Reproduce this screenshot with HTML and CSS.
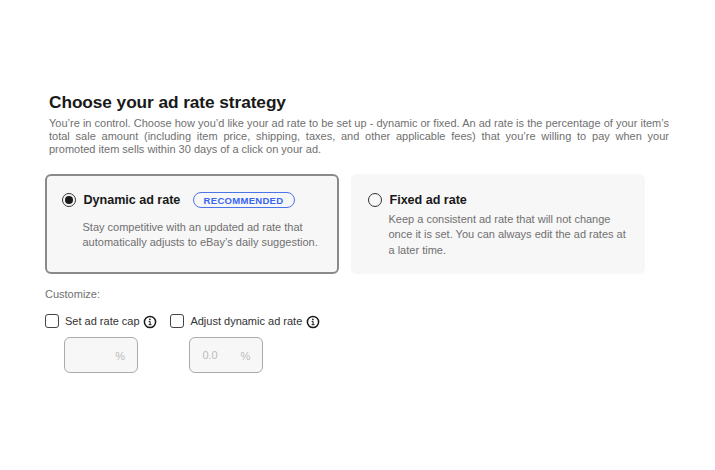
FILE: index.html
```html
<!DOCTYPE html>
<html lang="en">
<head>
    <meta charset="UTF-8">
    <meta name="viewport" content="width=device-width, initial-scale=1.0">
    <title>Choose your ad rate strategy</title>
    <link rel="stylesheet" href="styles.css">
</head>
<body>
    <div class="intro">
        <h1>Choose your ad rate strategy</h1>
        <p>You’re in control. Choose how you’d like your ad rate to be set up - dynamic or fixed. An ad rate is the percentage of your item’s total sale amount (including item price, shipping, taxes, and other applicable fees) that you’re willing to pay when your promoted item sells within 30 days of a click on your ad.</p>
    </div>

    <div class="cards">
        <div class="card selected">
            <div class="card-head">
                <span class="radio checked"></span>
                <h2 class="dynamic-title">Dynamic ad rate</h2>
                <span class="badge">RECOMMENDED</span>
            </div>
            <p class="dynamic-text">Stay competitive with an updated ad rate that<br>automatically adjusts to eBay’s daily suggestion.</p>
        </div>
        <div class="card">
            <div class="card-head">
                <span class="radio"></span>
                <h2>Fixed ad rate</h2>
            </div>
            <p class="fixed-text">Keep a consistent ad rate that will not change<br>once it is set. You can always edit the ad rates at<br>a later time.</p>
        </div>
    </div>

    <div class="customize">
        <p class="customize-label">Customize:</p>
        <div class="options">
            <div class="option cap">
                <div class="option-head">
                    <span class="checkbox"></span>
                    <span class="option-label">Set ad rate cap</span>
                    <svg class="info" viewBox="0 0 14 14">
                        <circle cx="7" cy="7" r="5.6" fill="none" stroke="#191919" stroke-width="1.5"/>
                        <circle cx="6.9" cy="4.4" r="0.85" fill="#191919"/>
                        <path d="M5.7 6.5h1.4v3.2M5.6 9.7h2.9" fill="none" stroke="#191919" stroke-width="1"/>
                    </svg>
                </div>
                <div class="field"><span class="value"></span><span class="unit">%</span></div>
            </div>
            <div class="option adjust">
                <div class="option-head">
                    <span class="checkbox"></span>
                    <span class="option-label">Adjust dynamic ad rate</span>
                    <svg class="info" viewBox="0 0 14 14">
                        <circle cx="7" cy="7" r="5.6" fill="none" stroke="#191919" stroke-width="1.5"/>
                        <circle cx="6.9" cy="4.4" r="0.85" fill="#191919"/>
                        <path d="M5.7 6.5h1.4v3.2M5.6 9.7h2.9" fill="none" stroke="#191919" stroke-width="1"/>
                    </svg>
                </div>
                <div class="field"><span class="value">0.0</span><span class="unit">%</span></div>
            </div>
        </div>
    </div>
</body>
</html>
```
FILE: styles.css
```css
* {
    box-sizing: border-box;
}
body {
    margin: 0;
    padding: 92px 45px 0;
    background-color: #fff;
    color: #707070;
    font-family: "Liberation Sans", Arial, sans-serif;
    font-size: 11px;
}
h1, h2, p {
    margin: 0;
}
.intro {
    width: 620px;
    margin-left: 4px;
}
.intro h1 {
    color: #191919;
    font-size: 17.3px;
    letter-spacing: -0.08px;
    line-height: 20px;
    white-space: nowrap;
}
.intro p {
    margin-top: 5px;
    font-size: 11px;
    line-height: 13px;
    text-align: justify;
}
.cards {
    display: flex;
    gap: 12px;
    margin-top: 18px;
}
.card {
    width: 294px;
    height: 100px;
    padding: 17px 0 0 17px;
    border-radius: 6px;
    background-color: #f7f7f7;
}
.card.selected {
    padding: 15px 0 0 15px;
    border: 2px solid #8a8a8a;
}
.card-head {
    display: flex;
    align-items: center;
    height: 18px;
}
.card h2 {
    margin-left: 7.5px;
    color: #191919;
    font-size: 12.6px;
    letter-spacing: -0.03px;
    line-height: 18px;
    white-space: nowrap;
}
.card .dynamic-title {
    width: 97px;
}
.radio {
    display: flex;
    align-items: center;
    justify-content: center;
    width: 14px;
    height: 14px;
    border: 1px solid #333;
    border-radius: 50%;
}
.radio.checked::after {
    content: "";
    width: 8px;
    height: 8px;
    border-radius: 50%;
    background-color: #191919;
}
.badge {
    width: 102px;
    height: 16px;
    margin-left: 12px;
    border: 1px solid #4b74e8;
    border-radius: 8px;
    color: #3665f3;
    font-size: 9.5px;
    font-weight: bold;
    letter-spacing: 0.3px;
    line-height: 15px;
    text-align: center;
}
.card p {
    margin-left: 20.5px;
    font-size: 11px;
    line-height: 15.5px;
    white-space: nowrap;
}
.card .dynamic-text {
    padding-top: 10.5px;
}
.card .fixed-text {
    padding-top: 2.5px;
}
.customize {
    margin-top: 14px;
}
.customize-label {
    font-size: 11px;
    line-height: 13px;
}
.options {
    display: flex;
    margin-top: 12px;
}
.option.cap {
    width: 125.4px;
}
.option-head {
    display: flex;
    align-items: center;
    height: 16px;
}
.checkbox {
    flex: none;
    width: 14px;
    height: 14px;
    border: 1px solid #444;
    border-radius: 3px;
}
.option-label {
    width: 75px;
    margin-left: 6px;
    color: #333;
    font-size: 11px;
    white-space: nowrap;
}
.adjust .option-label {
    width: 113px;
}
.info {
    flex: none;
    width: 14px;
    height: 14px;
    margin: 1px 0 0 3px;
}
.field {
    display: flex;
    align-items: center;
    justify-content: space-between;
    width: 74px;
    height: 36px;
    margin: 8px 0 0 19px;
    padding: 0 12px;
    border: 1px solid #aaa;
    border-radius: 6px;
    background-color: #f7f7f7;
    color: #bbb;
    font-size: 11px;
}
.unit {
    padding-top: 2px;
}
```
